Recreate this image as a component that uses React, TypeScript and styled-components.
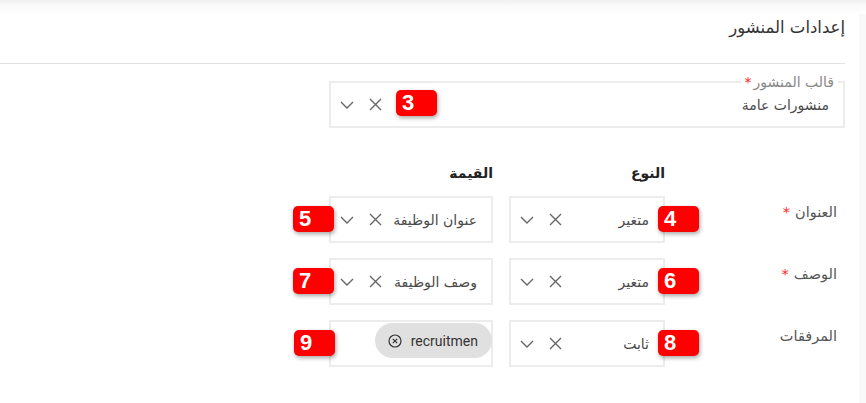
import React from 'react';
import styled, { createGlobalStyle } from 'styled-components';

const GlobalStyle = createGlobalStyle`
  html, body {
    margin: 0;
    padding: 0;
    background: #fff;
  }
  body {
    font-family: "DejaVu Sans", "Noto Sans", sans-serif;
    color: #444;
  }
`;

const Page = styled.div`
  display: grid;
  grid-template-columns: 845px 14px 7px;
  height: 403px;
  overflow: hidden;
  background: linear-gradient(to bottom, #f0f0f0 0, #fafafa 6px, #fff 14px);
`;

const ScrollTrack = styled.div`
  grid-column: 3;
  margin-top: 14px;
  background: #f9f9f9;
`;

const Content = styled.div`
  grid-column: 1;
  direction: rtl;
  display: flex;
  flex-direction: column;
`;

const Header = styled.div`
  height: 64px;
  box-sizing: border-box;
  padding-top: 16px;
  border-bottom: 1px solid #e2e2e2;
`;

const Title = styled.h2`
  margin: 0;
  font-size: 16.5px;
  font-weight: 400;
  line-height: 24px;
  color: #333;
`;

const Form = styled.div`
  width: 516px;
  display: flex;
  flex-direction: column;
`;

const OutlinedBox = styled.div<{ $height?: number }>`
  position: relative;
  box-sizing: border-box;
  height: ${(p) => p.$height ?? 47}px;
  border: 2px solid #ececec;
  display: flex;
  align-items: center;
  justify-content: space-between;
  padding-right: 14px;
`;

const TemplateBox = styled(OutlinedBox)`
  margin-top: 17px;
`;

const FloatingLabel = styled.span`
  position: absolute;
  top: -9px;
  right: 5px;
  padding: 0 4px;
  background: #fff;
  font-size: 14px;
  line-height: 16px;
  color: #888;
  white-space: nowrap;
`;

const Star = styled.span<{ $gap: number }>`
  color: #ff1f1f;
  margin-right: ${(p) => p.$gap}px;
`;

const ValueText = styled.span`
  font-size: 14px;
  color: #4a4a4a;
  white-space: nowrap;
`;

const Adornment = styled.div`
  display: flex;
  align-items: center;
  padding-left: 2px;
`;

const IconButton = styled.span`
  width: 28px;
  height: 28px;
  display: flex;
  align-items: center;
  justify-content: center;
  color: #666;
`;

const Badge = styled.span<{ $side: 'left' | 'right'; $offset: number; $top: number }>`
  position: absolute;
  top: ${(p) => p.$top}px;
  ${(p) => p.$side}: ${(p) => p.$offset}px;
  width: 41px;
  height: 26px;
  box-sizing: border-box;
  padding-left: 6px;
  direction: ltr;
  text-align: left;
  background: #ff0000;
  border-radius: 5px;
  box-shadow: 1px 2px 4px rgba(0, 0, 0, 0.35);
  color: #fff;
  font-family: "Liberation Sans", Arial, sans-serif;
  font-weight: 700;
  font-size: 22px;
  line-height: 26px;
  z-index: 2;
`;

const FieldGrid = styled.div`
  display: grid;
  grid-template-columns: 164px 156px 164px;
  column-gap: 16px;
  row-gap: 15px;
  margin-top: 35px;
`;

const ColumnHead = styled.div<{ $col: number }>`
  grid-column: ${(p) => p.$col};
  font-size: 14px;
  font-weight: 700;
  line-height: 20px;
  color: #222;
  margin-bottom: -2px;
`;

const RowLabel = styled.div`
  grid-column: 1;
  padding: 6px 8px 0 0;
  font-size: 14.5px;
  line-height: 20px;
  color: #555;
  white-space: nowrap;
`;

const ChipBox = styled(OutlinedBox)`
  align-items: flex-start;
  justify-content: flex-start;
  padding: 1px 0 0 0;
`;

const Chip = styled.span`
  display: inline-flex;
  align-items: center;
  height: 35px;
  box-sizing: border-box;
  margin-right: -1px;
  padding: 0 14px 0 13px;
  gap: 9px;
  border-radius: 18px;
  background: #e0e0e0;
  direction: ltr;
  font-family: Roboto, "Liberation Sans", sans-serif;
  font-size: 14px;
  color: #333;
`;

const Chevron = () => (
  <svg width="14" height="8" viewBox="0 0 14 8" fill="none">
    <path d="M1 1 L7 7 L13 1" stroke="currentColor" strokeWidth="1.4" />
  </svg>
);

const Cross = () => (
  <svg width="13" height="13" viewBox="0 0 13 13" fill="none">
    <path d="M1 1 L12 12 M12 1 L1 12" stroke="currentColor" strokeWidth="1.4" />
  </svg>
);

const CircleCross = () => (
  <svg width="14" height="14" viewBox="0 0 14 14" fill="none">
    <circle cx="7" cy="7" r="6" stroke="#333" strokeWidth="1.2" />
    <path d="M4.8 4.8 L9.2 9.2 M9.2 4.8 L4.8 9.2" stroke="#333" strokeWidth="1.2" />
  </svg>
);

const Controls = () => (
  <Adornment>
    <IconButton><Cross /></IconButton>
    <IconButton><Chevron /></IconButton>
  </Adornment>
);

interface SelectProps {
  value: string;
  badge: string;
  badgeSide: 'left' | 'right';
}

const SelectField = ({ value, badge, badgeSide }: SelectProps) => (
  <OutlinedBox>
    <ValueText>{value}</ValueText>
    <Controls />
    <Badge $side={badgeSide} $offset={badgeSide === 'right' ? -36 : -38} $top={8}>{badge}</Badge>
  </OutlinedBox>
);

const rows = [
  { label: 'العنوان', required: true, type: 'متغير', value: 'عنوان الوظيفة', badges: ['4', '5'] },
  { label: 'الوصف', required: true, type: 'متغير', value: 'وصف الوظيفة', badges: ['6', '7'] },
];

const App = () => {
  return (
    <>
      <GlobalStyle />
      <Page>
        <Content>
          <Header>
            <Title>إعدادات المنشور</Title>
          </Header>
          <Form>
            <TemplateBox>
              <FloatingLabel>قالب المنشور<Star $gap={2}>*</Star></FloatingLabel>
              <ValueText>منشورات عامة</ValueText>
              <Controls />
              <Badge $side="left" $offset={65} $top={7}>3</Badge>
            </TemplateBox>

            <FieldGrid>
              <ColumnHead $col={2}>النوع</ColumnHead>
              <ColumnHead $col={3}>القيمة</ColumnHead>

              {rows.map((r) => (
                <React.Fragment key={r.label}>
                  <RowLabel>
                    {r.label}
                    {r.required && <Star $gap={5}>*</Star>}
                  </RowLabel>
                  <SelectField value={r.type} badge={r.badges[0]} badgeSide="right" />
                  <SelectField value={r.value} badge={r.badges[1]} badgeSide="left" />
                </React.Fragment>
              ))}

              <RowLabel>المرفقات</RowLabel>
              <SelectField value="ثابت" badge="8" badgeSide="right" />
              <ChipBox>
                <Chip>
                  <CircleCross />
                  recruitmen
                </Chip>
                <Badge $side="left" $offset={-37} $top={8}>9</Badge>
              </ChipBox>
            </FieldGrid>
          </Form>
        </Content>
        <ScrollTrack />
      </Page>
    </>
  );
};

export default App;
